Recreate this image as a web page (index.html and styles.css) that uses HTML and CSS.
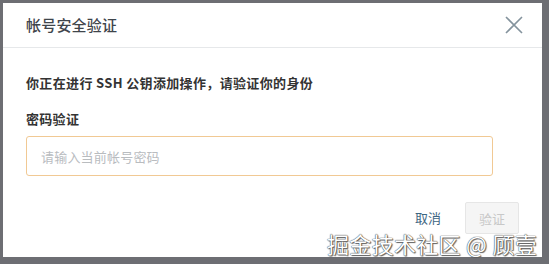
FILE: index.html
```html
<!DOCTYPE html>
<html lang="zh-CN">
<head>
<meta charset="utf-8">
<link rel="stylesheet" href="styles.css">
</head>
<body>
<div class="page">
  <div class="modal">
    <div class="modal-header">
      <div class="modal-title">帐号安全验证</div>
      <svg class="close" width="18" height="18" viewBox="0 0 18 18"><path d="M1 1 L17 17 M17 1 L1 17" stroke="#84939d" stroke-width="1.6" fill="none"/></svg>
    </div>
    <div class="modal-body">
      <div class="intro">你正在进行 SSH 公钥添加操作，请验证你的身份</div>
      <div class="label">密码验证</div>
      <div class="input">请输入当前帐号密码</div>
    </div>
    <div class="modal-footer">
      <span class="btn-text">取消</span>
      <span class="btn-disabled">验证</span>
    </div>
  </div>
  <div class="watermark">掘金技术社区 @ 顾壹</div>
</div>
</body>
</html>
```
FILE: styles.css
```css
html, body {
  margin: 0;
  padding: 0;
  background: #6d6e73;
  font-family: "Noto Sans CJK SC", "Noto Sans", sans-serif;
}
.page {
  position: relative;
  width: 549px;
  height: 264px;
  padding: 3px 0 0 3px;
  box-sizing: border-box;
}
.modal {
  width: 539px;
  height: 254px;
  background: #fff;
  box-sizing: border-box;
}
.modal-header {
  height: 45px;
  box-sizing: border-box;
  border-bottom: 1px solid #e6e8ea;
  display: flex;
  align-items: center;
  justify-content: space-between;
  padding: 0 19px 0 23px;
}
.modal-title {
  font-size: 15px;
  font-weight: 500;
  color: #3f454b;
  line-height: 20px;
  letter-spacing: 0.2px;
}
.close { display: block; }
.modal-body {
  padding: 25px 23px 0 23px;
}
.intro {
  font-size: 13px;
  font-weight: 700;
  color: #333;
  line-height: 20px;
  letter-spacing: 0.35px;
}
.label {
  margin-top: 16px;
  font-size: 13px;
  font-weight: 700;
  color: #333;
  line-height: 20px;
  letter-spacing: 0.3px;
}
.input {
  margin-top: 7px;
  width: 467px;
  height: 40px;
  box-sizing: border-box;
  border: 1px solid #f1c994;
  border-radius: 3px;
  padding: 0 14px;
  display: flex;
  align-items: center;
  font-size: 13px;
  color: #b9bcbf;
  letter-spacing: 0.2px;
}
.modal-footer {
  display: flex;
  justify-content: flex-end;
  align-items: center;
  gap: 24px;
  padding: 26px 23px 0 0;
}
.btn-text {
  font-size: 13px;
  color: #3e6682;
  line-height: 20px;
}
.btn-disabled {
  width: 54px;
  height: 32px;
  box-sizing: border-box;
  display: flex;
  align-items: center;
  justify-content: center;
  background: #f5f5f5;
  border: 1px solid #e6e6e6;
  border-radius: 2px;
  font-size: 13px;
  color: #c8c8c8;
}
.watermark {
  position: absolute;
  right: 12px;
  bottom: 8px;
  font-size: 22px;
  line-height: 26px;
  color: #fff;
  letter-spacing: 0.3px;
  text-shadow: 0 0 1px #444, 0 0 1px #444, 1px 1px 1px #666;
}
```
